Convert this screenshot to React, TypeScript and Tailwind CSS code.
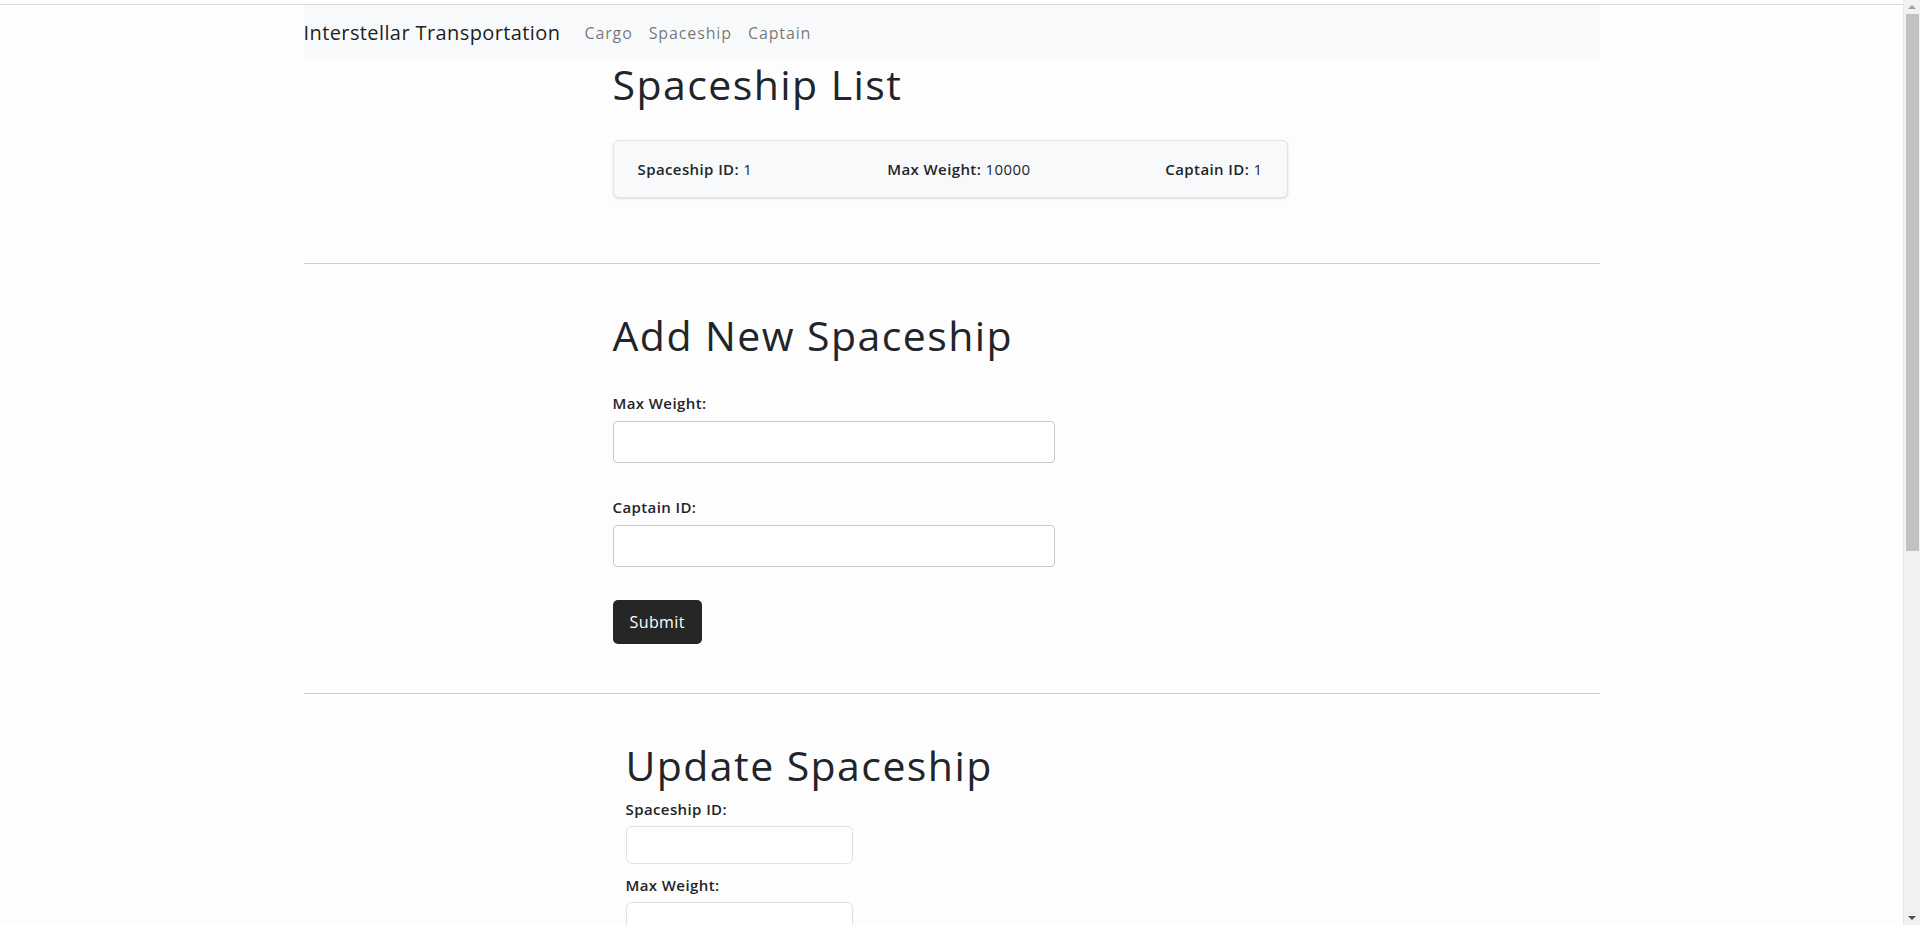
import React from "react";

// Données du vaisseau affiché dans la liste
const spaceships = [{ id: 1, maxWeight: 10000, captainId: 1 }];

const links = ["Cargo", "Spaceship", "Captain"];

function Field({ label, className }: { label: string; className: string }) {
  return (
    <div>
      <label className="block text-[15px] font-semibold leading-6">{label}</label>
      <input type="text" className={className} />
    </div>
  );
}

export default function App() {
  return (
    <div className="flex h-screen overflow-hidden bg-[#fdfdfd] font-['Open_Sans',sans-serif] tracking-[0.025em] text-[#212529]">
      <div className="min-w-0 flex-1">
        <div className="h-1 bg-white" />
        <div className="border-t border-[#dadada]">
          <div className="mx-auto w-[1296px] pb-20">
            {/* Barre de navigation */}
            <nav className="flex h-[55px] items-center bg-[#f8f9fa]">
              <span className="mr-4 text-xl text-black/90">Interstellar Transportation</span>
              {links.map((l) => (
                <a key={l} className="px-2 text-base tracking-[0.055em] text-black/55">
                  {l}
                </a>
              ))}
            </nav>

            {/* Liste */}
            <section className="pl-[309px]">
              <h1 className="text-[41px] leading-[48px] tracking-[0.035em]">Spaceship List</h1>
              {spaceships.map((s) => (
                <div
                  key={s.id}
                  className="mt-8 flex w-[675px] items-center justify-between rounded-md border border-[#e2e4e7] bg-[#f8f9fa] px-6 py-4 text-[15px] leading-6 shadow-sm"
                >
                  <span>
                    <span className="font-semibold">Spaceship ID:</span> {s.id}
                  </span>
                  <span>
                    <span className="font-semibold">Max Weight:</span> {s.maxWeight}
                  </span>
                  <span>
                    <span className="font-semibold">Captain ID:</span> {s.captainId}
                  </span>
                </div>
              ))}
            </section>

            <div className="mt-[65px] h-px bg-[#cfcfcf]" />

            {/* Ajout */}
            <section className="pl-[309px] pt-[47px]">
              <h1 className="text-[41px] leading-[48px] tracking-[0.035em]">Add New Spaceship</h1>
              <div className="mt-8 flex flex-col gap-8">
                <div>
                  <label className="block text-[15px] font-semibold leading-6">Max Weight:</label>
                  <input type="text" className="mt-1.5 block h-[42px] w-[442px] rounded border border-[#c8c8c8] bg-white" />
                </div>
                <div>
                  <label className="block text-[15px] font-semibold leading-6">Captain ID:</label>
                  <input type="text" className="mt-1.5 block h-[42px] w-[442px] rounded border border-[#c8c8c8] bg-white" />
                </div>
              </div>
              <button className="mt-[33px] h-[44px] rounded-[5px] bg-[#262626] px-[17px] text-base font-medium text-white">
                Submit
              </button>
            </section>

            <div className="mt-[49px] h-px bg-[#cfcfcf]" />

            {/* Mise à jour */}
            <section className="pl-[322px] pt-[47px]">
              <h1 className="mb-2 text-[41px] leading-[48px] tracking-[0.035em]">Update Spaceship</h1>
              <div className="flex flex-col gap-[9px]">
                <Field
                  label="Spaceship ID:"
                  className="mt-[5px] block h-[38px] w-[227px] rounded-md border border-[#dee2e6] bg-white"
                />
                <Field
                  label="Max Weight:"
                  className="mt-[5px] block h-[38px] w-[227px] rounded-md border border-[#dee2e6] bg-white"
                />
              </div>
            </section>
          </div>
        </div>
      </div>

      {/* Barre de défilement */}
      <div className="flex w-[17px] shrink-0 flex-col items-center border-l border-[#e8e8e8] bg-[#f1f1f1]">
        <div className="mt-[5px] h-0 w-0 border-x-[4px] border-b-[4px] border-x-transparent border-b-[#a3a3a3]" />
        <div className="mt-[5px] h-[537px] w-[13px] bg-[#c1c1c1]" />
        <div className="mt-auto mb-[5px] h-0 w-0 border-x-[4px] border-t-[4px] border-x-transparent border-t-[#505050]" />
      </div>
    </div>
  );
}
